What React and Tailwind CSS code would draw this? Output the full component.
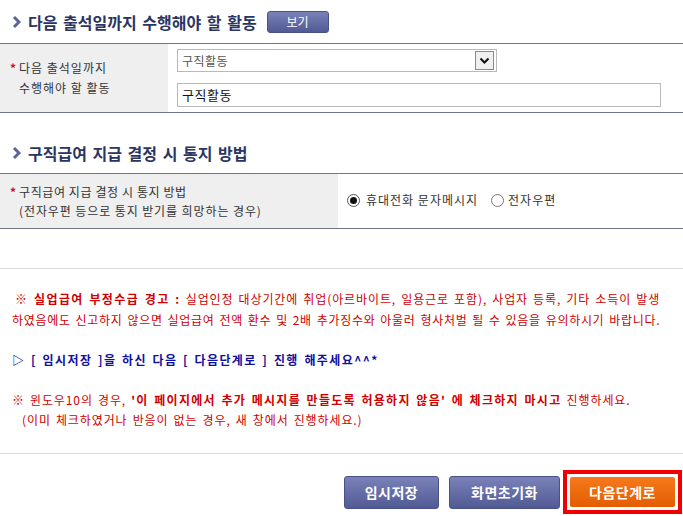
const Chevron = () => (
  <svg width="9" height="14" viewBox="0 0 9 14" className="shrink-0">
    <polyline points="2,2 7,7 2,12" fill="none" stroke="#5b6399" strokeWidth="3" />
  </svg>
);

const BlueButton = ({ children, className = "" }) => (
  <button
    className={`rounded-[3px] border border-[#4a5189] bg-gradient-to-b from-[#7a82b9] to-[#525a94] text-white font-bold ${className}`}
  >
    {children}
  </button>
);

export default function App() {
  return (
    <div className="w-[683px] h-[516px] overflow-hidden bg-white font-['Noto_Sans_CJK_KR',sans-serif] text-[12px] text-[#333]">
      {/* section 1 */}
      <div className="h-[43px] flex items-center pl-[12px] gap-[7px]">
        <Chevron />
        <h2 className="text-[16px] font-bold text-[#2b3564] [word-spacing:2px]">
          다음 출석일까지 수행해야 할 활동
        </h2>
        <BlueButton className="ml-[3px] w-[62px] h-[22px] text-[12px] font-normal">보기</BlueButton>
      </div>
      <div className="flex h-[70px] border-y border-[#6f748f]">
        <div className="w-[168px] bg-[#efefef] flex flex-col justify-center pl-[10px] leading-[20px] text-[#333] tracking-[1px]">
          <div className="flex items-center">
            <span className="text-[#c8102e] w-[9px] font-bold">*</span>
            <span>다음 출석일까지</span>
          </div>
          <div className="pl-[9px]">수행해야 할 활동</div>
        </div>
        <div className="flex-1 pl-[9px] pt-[5px] flex flex-col gap-[11px]">
          <div className="w-[320px] h-[23px] border border-[#b9b9b9] flex items-center justify-between pl-[4px] pr-[2px] text-[#555] tracking-[0.5px]">
            <span>구직활동</span>
            <span className="w-[19px] h-[19px] border border-[#8a8a8a] bg-[#f0f0f0] flex items-center justify-center">
              <svg width="11" height="8" viewBox="0 0 11 8">
                <polyline points="1.5,1.5 5.5,5.5 9.5,1.5" fill="none" stroke="#111" strokeWidth="2" />
              </svg>
            </span>
          </div>
          <div className="w-[484px] h-[24px] border border-[#b9b9b9] flex items-center pl-[4px] text-[13px] text-[#111] tracking-[0.5px]">
            구직활동
          </div>
        </div>
      </div>

      {/* section 2 */}
      <div className="h-[60px] pt-[20px] flex items-center pl-[12px] gap-[7px]">
        <Chevron />
        <h2 className="text-[16px] font-bold text-[#2b3564] [word-spacing:2px]">
          구직급여 지급 결정 시 통지 방법
        </h2>
      </div>
      <div className="flex h-[56px] border-y border-[#6f748f]">
        <div className="w-[338px] bg-[#efefef] flex flex-col justify-center pl-[10px] leading-[19px] tracking-[0.6px]">
          <div className="flex items-center">
            <span className="text-[#c8102e] w-[9px] font-bold">*</span>
            <span>구직급여 지급 결정 시 통지 방법</span>
          </div>
          <div className="pl-[9px] tracking-[0.9px]">(전자우편 등으로 통지 받기를 희망하는 경우)</div>
        </div>
        <div className="flex-1 flex items-center pl-[9px] pb-[2px] tracking-[1px]">
          <span className="w-[13px] h-[13px] rounded-full border border-[#555] flex items-center justify-center">
            <span className="w-[7px] h-[7px] rounded-full bg-[#111]" />
          </span>
          <span className="ml-[6px]">휴대전화 문자메시지</span>
          <span className="ml-[13px] w-[13px] h-[13px] rounded-full border border-[#777] bg-white" />
          <span className="ml-[4px]">전자우편</span>
        </div>
      </div>

      {/* notice */}
      <div className="h-[40px] border-b border-[#dcdcdc]" />
      <div className="h-[185px] border-b border-[#dcdcdc] pl-[12px] pt-[19px] whitespace-nowrap">
        <p className="text-[#d00000] leading-[21px] tracking-[0.9px] [word-spacing:1.5px]">
          <span className="font-bold ml-[3px] tracking-[1.4px]">※ 실업급여 부정수급 경고 :</span> 실업인정 대상기간에 취업(아르바이트, 일용근로 포함), 사업자 등록, 기타 소득이 발생
          <br />
          <span className="tracking-[0.7px]">하였음에도 신고하지 않으면 실업급여 전액 환수 및 2배 추가징수와 아울러 형사처벌 될 수 있음을 유의하시기 바랍니다.</span>
        </p>
        <p className="mt-[19px] text-[#1010a0] font-bold leading-[21px] tracking-[1.4px] [word-spacing:1.5px]">
          ▷ [ 임시저장 ]을 하신 다음 [ 다음단계로 ] 진행 해주세요^^*
        </p>
        <p className="mt-[20px] text-[#d00000] leading-[20px] tracking-[0.9px] [word-spacing:1.5px]">
          ※ 윈도우10의 경우, <span className="font-bold tracking-[1.3px]">'이 페이지에서 추가 메시지를 만들도록 허용하지 않음' 에 체크하지 마시고</span> 진행하세요.
          <br />
          <span className="pl-[10px]">(이미 체크하였거나 반응이 없는 경우, 새 창에서 진행하세요.)</span>
        </p>
      </div>

      {/* buttons */}
      <div className="flex justify-end items-center pt-[17px]">
        <BlueButton className="w-[95px] h-[33px] text-[14px] tracking-[0.5px]">임시저장</BlueButton>
        <BlueButton className="ml-[10px] w-[111px] h-[33px] text-[14px] tracking-[0.5px]">화면초기화</BlueButton>
        <div className="ml-[3px] mr-[1px] border-[4px] border-[#f00000] p-[3px] -mt-[1px]">
          <button className="w-[105px] h-[30px] rounded-[2px] bg-gradient-to-b from-[#f47a1a] to-[#e45c00] text-white font-bold text-[14px] tracking-[0.5px]">
            다음단계로
          </button>
        </div>
      </div>
    </div>
  );
}
